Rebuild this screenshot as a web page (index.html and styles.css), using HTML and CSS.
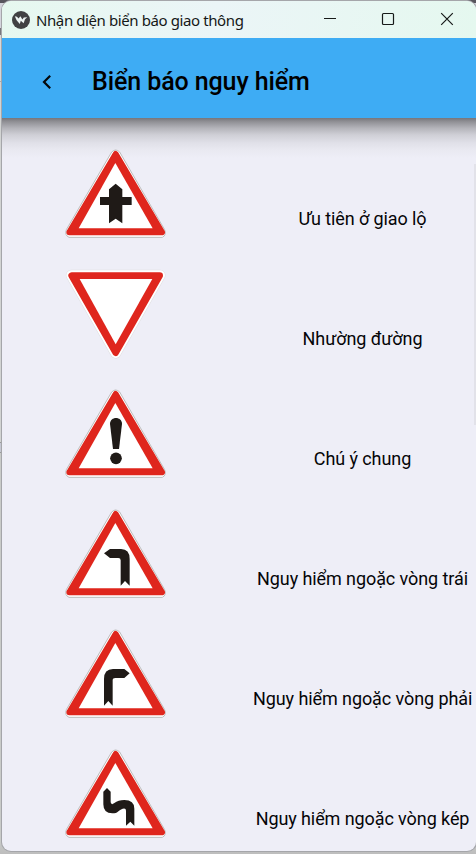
FILE: index.html
```html
<!DOCTYPE html>
<html lang="vi">
<head>
<meta charset="utf-8">
<title>Nhận diện biển báo giao thông</title>
<link rel="stylesheet" href="styles.css">
</head>
<body>
<svg class="defs" width="0" height="0" aria-hidden="true">
  <symbol id="warning" viewBox="0 0 360 330">
    <path d="M170 36Q182 24 194 36L329 269Q335 286 322 292H42Q28 286 34 269Z" fill="#fff" stroke="#bcbcbc" stroke-width="3"/>
    <path d="M182 42L321 277H43Z" fill="#df261d" stroke="#df261d" stroke-width="18" stroke-linejoin="round"/>
    <path d="M181 69L293 265H71Z" fill="#fff"/>
  </symbol>
</svg>
<div class="window">
  <header class="titlebar">
    <svg class="app-icon" viewBox="0 0 18 18"><circle cx="9" cy="9" r="9" fill="#414143"/><path d="M2.8 5.2L5 5.8 6.5 7.6 8.4 5.3 10.4 8.5 11.8 6.4 15.3 6.3 13 8.3 11.6 12.2 8.8 9.8 7.8 13.1 4.6 9.3Z" fill="#edf4f3"/></svg>
    <span class="caption">Nhận diện biển báo giao thông</span>
    <svg class="controls" viewBox="0 0 154 37" fill="none" stroke="#171a19" stroke-width="1.2"><path d="M2 17.5H14"/><rect x="60.5" y="12.5" width="11" height="11" rx="1"/><path d="M119.2 12.2L130.8 23.8M130.8 12.2L119.2 23.8"/></svg>
  </header>
  <div class="toolbar">
    <svg class="back" viewBox="0 0 12 16" fill="none" stroke="#05080a" stroke-width="2.2"><path d="M9.2 1.8L3 8l6.2 6.2"/></svg>
    <h1>Biển báo nguy hiểm</h1>
  </div>
  <main class="list">
    <div class="row">
      <svg class="sign" viewBox="0 0 360 330"><use href="#warning"/><path d="M182 131L202 148V171H230V195H202V250L182 236L162 250V195H135V171H162V148Z" fill="#1f1a17"/></svg>
      <span>Ưu tiên ở giao lộ</span>
    </div>
    <div class="row">
      <svg class="sign" viewBox="0 0 360 330"><path d="M49 46H315L182 279Z" fill="#fff" stroke="#dddde0" stroke-width="33" stroke-linejoin="round"/><path d="M49 46H315L182 279Z" fill="#fff" stroke="#fff" stroke-width="30" stroke-linejoin="round"/><path d="M50 47H314L182 278Z" fill="#df261d" stroke="#df261d" stroke-width="20" stroke-linejoin="round"/><path d="M74 57H292L182 253Z" fill="#fff"/></svg>
      <span>Nhường đường</span>
    </div>
    <div class="row">
      <svg class="sign" viewBox="0 0 360 330"><use href="#warning"/><path d="M165 132C165 108 201 108 201 132L192 207H174Z" fill="#1f1a17"/><circle cx="183" cy="235" r="17.5" fill="#1f1a17"/></svg>
      <span>Chú ý chung</span>
    </div>
    <div class="row">
      <svg class="sign" viewBox="0 0 360 330"><use href="#warning"/><path d="M147 160L165 147H198Q224 147 224 177V257L210 243L197 257V181Q197 174 190 174H165Z" fill="#1f1a17"/></svg>
      <span>Nguy hiểm ngoặc vòng trái</span>
    </div>
    <div class="row">
      <svg class="sign" viewBox="0 0 360 330"><use href="#warning"/><path d="M224 160L208 147H174Q147 147 147 177V257L160 243L173 257V181Q173 174 181 174H208Z" fill="#1f1a17"/></svg>
      <span>Nguy hiểm ngoặc vòng phải</span>
    </div>
    <div class="row">
      <svg class="sign" viewBox="0 0 360 330"><use href="#warning"/><path d="M156 144L167 155V187Q169 196 177 190C187 182 195 180 208 180Q238 180 238 206V257L226 245L213 257V212Q213 203 203 206C188 211 190 220 172 220Q145 220 145 193V155Z" fill="#1f1a17"/></svg>
      <span>Nguy hiểm ngoặc vòng kép</span>
    </div>
  </main>
  <div class="scrollbar"></div>
</div>
</body>
</html>
```
FILE: styles.css
```css
* { box-sizing: border-box; }
body {
  margin: 0;
  width: 476px;
  height: 854px;
  padding: 1px 0 0 2px;
  overflow: hidden;
  font-family: Roboto, sans-serif;
  background: linear-gradient(#57555d 0 3px, #d5d5dd 3px 28px, #77777c 28px 35px, #d8d8d8 35px 81px, #aaa 81px 82px, #d2d4d3 82px 442px, #999 442px 443px, #c5c7d3 443px 452px, #999 452px 453px, #c9cbc9 453px 840px, #bdbdbd);
}
.defs { position: absolute; }
.window {
  position: relative;
  width: 474px;
  height: 850px;
  overflow: hidden;
  border-radius: 9px;
  background: #eeeef7;
  box-shadow: 0 0 0 1px #a5a6aa;
}
.titlebar {
  display: flex;
  align-items: center;
  height: 37px;
  padding-left: 10px;
  background: linear-gradient(100deg, #e6f8ef, #ebf5f7 45%, #e5f8ef);
}
.app-icon { flex: none; width: 18px; height: 18px; }
.caption {
  flex: none;
  width: 284px;
  padding-left: 6px;
  font: 15px/20px "Noto Sans", sans-serif;
  letter-spacing: -0.4px;
  white-space: nowrap;
  color: #151817;
}
.controls { flex: none; width: 154px; height: 37px; margin-left: 8px; }
.toolbar {
  position: relative;
  display: flex;
  align-items: center;
  height: 80px;
  padding: 7px 0 0 39px;
  background: #3eacf4;
}
.toolbar::after {
  content: "";
  position: absolute;
  inset: 80px 0 auto;
  height: 40px;
  background: linear-gradient(#77767b, #929297 10%, #b3b3b9 25%, #cfcfd6 42%, #e0e0e8 62%, #e9e9f1 80%, #eeeef7);
}
.back { width: 12px; height: 16px; }
h1 {
  margin: 0 0 0 39px;
  font-size: 25px;
  font-weight: 500;
  letter-spacing: -0.1px;
  line-height: 32px;
  color: #000;
  white-space: nowrap;
}
.list { padding-top: 17px; }
.row {
  display: grid;
  grid-template-columns: 120px 219px;
  column-gap: 78px;
  align-items: center;
  height: 120px;
  padding-left: 53px;
}
.sign { position: relative; z-index: 1; width: 120px; height: 110px; }
.row span {
  padding-top: 48px;
  font-size: 18px;
  letter-spacing: -0.09px;
  line-height: 24px;
  text-align: center;
  white-space: nowrap;
  color: #050507;
}
.scrollbar {
  position: absolute;
  top: 163px;
  right: 0;
  width: 2px;
  height: 261px;
  background: #e2e2e9;
}
```
